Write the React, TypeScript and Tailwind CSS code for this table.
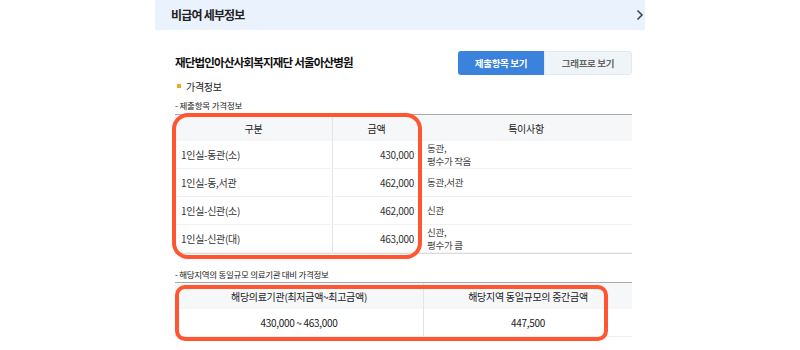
const font = { fontFamily: '"Noto Sans CJK KR", "Noto Sans", sans-serif' }

const rows = [
  { name: '1인실-동관(소)', price: '430,000', note: '동관,\n평수가 작음' },
  { name: '1인실-동,서관', price: '462,000', note: '동관,서관' },
  { name: '1인실-신관(소)', price: '462,000', note: '신관' },
  { name: '1인실-신관(대)', price: '463,000', note: '신관,\n평수가 큼' },
]

export default function App() {
  return (
    <div className="h-[350px] w-[800px] overflow-hidden bg-white" style={font}>
      <div className="ml-[155px] w-[490px]">
        <div className="flex h-[30px] items-center justify-between bg-[#eaf2fd] pl-[16px] pr-[1px]">
          <span className="text-[12px] font-semibold tracking-[-0.8px] text-[#222]">비급여 세부정보</span>
          <svg width="8" height="12" viewBox="0 0 8 12" className="text-[#444]">
            <path d="M1.5 1.5 L6 6 L1.5 10.5" fill="none" stroke="currentColor" strokeWidth="1.6" />
          </svg>
        </div>

        <div className="relative pl-[20px] pr-[13px] pt-[21px]">
          <div className="flex h-[24px] items-center justify-between">
            <span className="text-[11.5px] font-bold tracking-[-0.8px] text-[#111]">재단법인아산사회복지재단 서울아산병원</span>
            <div className="flex h-[24px] text-[9.5px] font-bold tracking-[-0.3px]">
              <div className="flex w-[86px] items-center justify-center rounded-l-[3px] bg-[#3b82dc] text-white">제출항목 보기</div>
              <div className="flex w-[88px] items-center justify-center rounded-r-[3px] border border-[#e3e9f0] bg-[#eff4f9] text-[#666]">그래프로 보기</div>
            </div>
          </div>

          <div className="mt-[4px] flex h-[14px] items-center gap-[5px] pl-[2px] text-[10px] tracking-[-0.3px] text-[#222]">
            <span className="h-[4px] w-[4px] bg-[#f5a623]" />
            <span>가격정보</span>
          </div>
          <div className="mt-[5px] h-[14px] text-[8.5px] leading-[14px] tracking-[-0.2px] text-[#222]">- 제출항목 가격정보</div>

          <div className="mt-[2px] border-t border-[#aaa] text-[10px] tracking-[-0.3px] text-[#333]">
            <div className="flex h-[26px] items-center bg-[#f6f7f9] text-[#222]">
              <div className="flex h-full w-[158px] items-center justify-center border-r border-[#e4e4e4]">구분</div>
              <div className="flex h-full w-[87px] items-center justify-center">금액</div>
              <div className="flex h-full flex-1 items-center justify-center">특이사항</div>
            </div>
            {rows.map((r) => (
              <div key={r.name} className="flex h-[28px] items-center border-b border-[#f1f1f1]">
                <div className="flex h-full w-[158px] items-center border-r border-[#e4e4e4] pl-[6px]">{r.name}</div>
                <div className="flex h-full w-[87px] items-center justify-end pr-[6px]">{r.price}</div>
                <div className="flex h-full flex-1 items-center whitespace-pre-line pl-[7px] text-[9.5px] leading-[13px] text-[#444]">
                  {r.note}
                </div>
              </div>
            ))}
          </div>
          <div className="border-t border-[#ddd]" />

          <div className="mt-[13px] h-[14px] text-[8.5px] leading-[14px] tracking-[-0.3px] text-[#222]">- 해당지역의 동일규모 의료기관 대비 가격정보</div>
          <div className="mt-[1px] border-t border-[#aaa] text-[10px] tracking-[-0.3px] text-[#222]">
            <div className="flex h-[26px] items-center bg-[#f6f7f9]">
              <div className="flex h-full w-[249px] items-center justify-center border-r border-[#e4e4e4]">해당의료기관(최저금액~최고금액)</div>
              <div className="flex h-full flex-1 items-center justify-center">해당지역 동일규모의 중간금액</div>
            </div>
            <div className="flex h-[28px] items-center border-b border-[#eee]">
              <div className="flex h-full w-[249px] items-center justify-center border-r border-[#e4e4e4]">430,000 ~ 463,000</div>
              <div className="flex h-full flex-1 items-center justify-center">447,500</div>
            </div>
          </div>

          <div className="pointer-events-none absolute left-[17px] top-[83px] h-[146px] w-[250px] rounded-[16px] border-[4px] border-[#ff5530]" />
          <div className="pointer-events-none absolute left-[20px] top-[255px] h-[56px] w-[433px] rounded-[10px] border-[4px] border-[#ff5530]" />
        </div>
      </div>
    </div>
  )
}
